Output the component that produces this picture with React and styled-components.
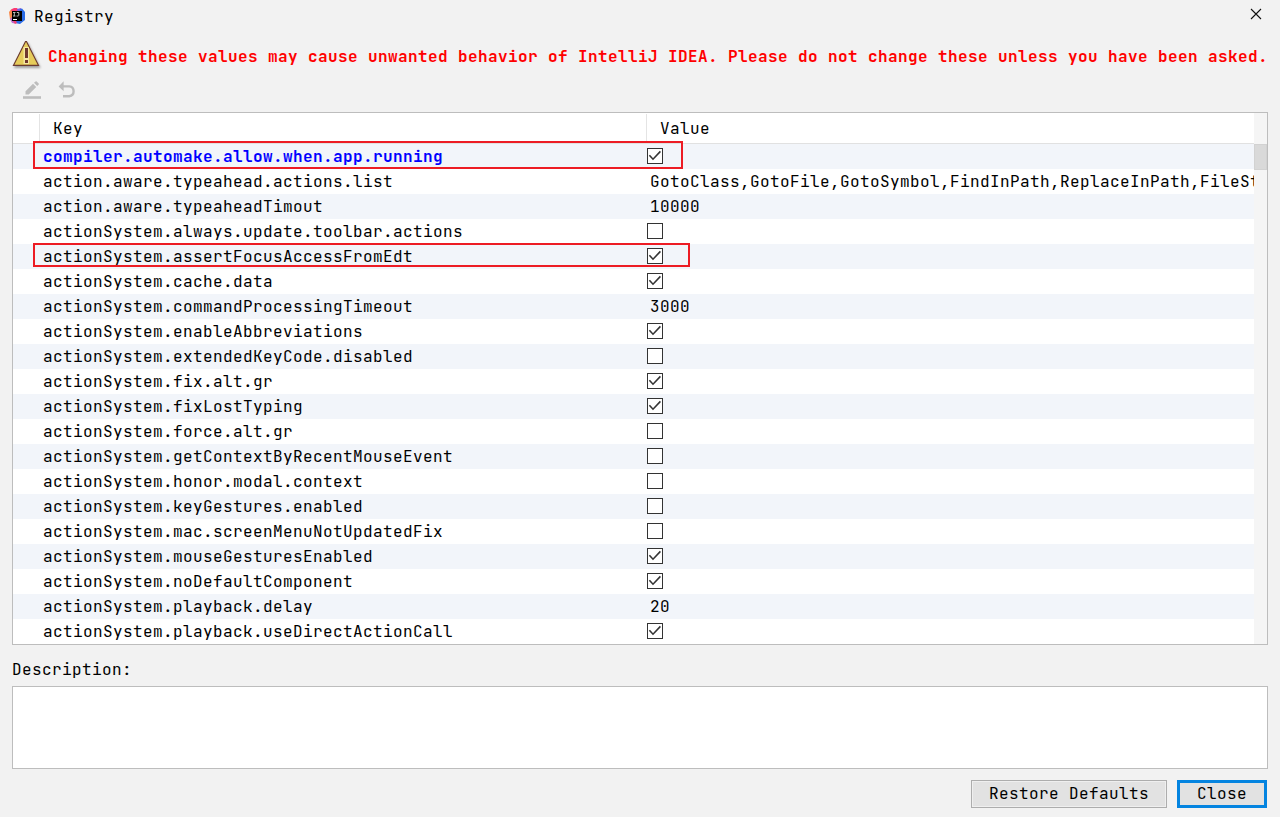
import React from "react";
import styled, { createGlobalStyle, css } from "styled-components";

const GlobalStyle = createGlobalStyle`
  * { box-sizing: border-box; }
  body {
    margin: 0;
    background: #f2f2f2;
    color: #000;
    font-family: "JetBrains Mono", "DejaVu Sans Mono", monospace;
    font-size: 16px;
    line-height: 24px;
    letter-spacing: 0.4px;
    overflow: hidden;
  }
`;

const Dialog = styled.div`
  width: 1280px;
  height: 817px;
  display: flex;
  flex-direction: column;
  background: #f2f2f2;
`;

const TitleBar = styled.header`
  height: 32px;
  flex: none;
  display: flex;
  align-items: center;
  padding: 0 18px 0 9px;
`;

const Title = styled.h1`
  margin: 2px auto 0 8px;
  font: inherit;
`;

const CloseIcon = styled.svg`
  display: block;
  margin-top: -4px;
`;

const Warning = styled.div`
  height: 40px;
  flex: none;
  display: flex;
  align-items: flex-start;
  padding: 8px 0 0 11px;
  color: #ff0000;
  font-weight: bold;
  white-space: nowrap;
`;

const WarningText = styled.span`
  margin: 5px 0 0 5px;
`;

const Toolbar = styled.div`
  height: 40px;
  flex: none;
  display: flex;
  gap: 16px;
  padding: 8px 0 0 22px;
`;

const Table = styled.section`
  height: 533px;
  flex: none;
  margin: 0 12px;
  display: flex;
  border: 1px solid #bdbdbd;
  background: #fff;
`;

const Grid = styled.div`
  flex: 1;
  min-width: 0;
  position: relative;
`;

const columns = css`
  display: grid;
  grid-template-columns: 26px 607px minmax(0, 1fr);
`;

const HeaderRow = styled.div`
  ${columns}
  height: 31px;
  padding-top: 1px;
  border-bottom: 1px solid #e1e1e1;
`;

const HeaderCell = styled.div`
  padding: 3px 0 0 13px;
  border-left: ${(p) => (p.$first ? "none" : "1px solid #e4e4e4")};
`;

const Row = styled.div`
  ${columns}
  height: 25px;
  background: ${(p) => (p.$striped ? "#f2f5fa" : "#fff")};
`;

const KeyCell = styled.div`
  grid-column: 2;
  padding: 1px 0 0 4px;
  color: ${(p) => (p.$changed ? "#0000ff" : "#000")};
  font-weight: ${(p) => (p.$changed ? "bold" : "normal")};
`;

const ValueCell = styled.div`
  padding-left: ${(p) => (p.$check ? "1px" : "4px")};
  padding-top: ${(p) => (p.$check ? "4px" : "1px")};
  overflow: hidden;
  white-space: nowrap;
`;

const Box = styled.span`
  display: block;
  width: 16px;
  height: 16px;
  border: 1px solid #333;
  background: #fff;

  svg { display: block; }
`;

const Scrollbar = styled.div`
  width: 13px;
  flex: none;
  padding-top: 31px;
  background: #f5f5f5;
`;

const Thumb = styled.div`
  height: 26px;
  background: #d9d9d9;
  border: 1px solid #d2d2d2;
`;

/* Annotation frames that lie over the rows they point out. */
const Highlight = styled.div`
  position: absolute;
  left: 20px;
  top: ${(p) => p.$top}px;
  width: ${(p) => p.$width}px;
  height: ${(p) => p.$height}px;
  border: 2px solid #ed1c24;
`;

const Label = styled.label`
  height: 41px;
  flex: none;
  padding: 13px 12px 0;
`;

const Description = styled.div`
  height: 83px;
  flex: none;
  margin: 0 12px;
  border: 1px solid #bdbdbd;
  background: #fff;
`;

const Footer = styled.footer`
  display: flex;
  justify-content: flex-end;
  gap: 10px;
  padding: 11px 13px 0;
`;

const Button = styled.button`
  width: ${(p) => p.$width}px;
  height: 28px;
  padding: 0 0 1px;
  display: flex;
  align-items: center;
  justify-content: center;
  border: ${(p) => (p.$primary ? "3px solid #0484e0" : "1px solid #adadad")};
  box-shadow: ${(p) => (p.$primary ? "none" : "inset 0 0 0 1px #efefef")};
  background: #e2e2e2;
  color: #000;
  font: inherit;
  letter-spacing: inherit;
`;

const rows = [
  ["compiler.automake.allow.when.app.running", true],
  ["action.aware.typeahead.actions.list", "GotoClass,GotoFile,GotoSymbol,FindInPath,ReplaceInPath,FileSt"],
  ["action.aware.typeaheadTimout", "10000"],
  ["actionSystem.always.update.toolbar.actions", false],
  ["actionSystem.assertFocusAccessFromEdt", true],
  ["actionSystem.cache.data", true],
  ["actionSystem.commandProcessingTimeout", "3000"],
  ["actionSystem.enableAbbreviations", true],
  ["actionSystem.extendedKeyCode.disabled", false],
  ["actionSystem.fix.alt.gr", true],
  ["actionSystem.fixLostTyping", true],
  ["actionSystem.force.alt.gr", false],
  ["actionSystem.getContextByRecentMouseEvent", false],
  ["actionSystem.honor.modal.context", false],
  ["actionSystem.keyGestures.enabled", false],
  ["actionSystem.mac.screenMenuNotUpdatedFix", false],
  ["actionSystem.mouseGesturesEnabled", true],
  ["actionSystem.noDefaultComponent", true],
  ["actionSystem.playback.delay", "20"],
  ["actionSystem.playback.useDirectActionCall", true],
];

function Logo() {
  return (
    <svg width="17" height="16" viewBox="0 0 17 16">
      <path d="M0 4 2 1.5 5 4 4 12 1 11.5z" fill="#f98a4b" />
      <path d="M1 11 4 8 9 13 6 15.5 3 15z" fill="#b86fd0" />
      <path d="M2 1.5 5 0 8 0 11 4 4 7z" fill="#fb3a72" />
      <path d="M8 1 12 0 14 4 9 6z" fill="#7c5be0" />
      <path d="M11 1.5 13 .5 16 4 16 12 11 16 6 15 9 8z" fill="#2a6be6" />
      <path d="M4 13h3l1 2-2 1z" fill="#ef3f78" />
      <rect x="3" y="3" width="10" height="10" fill="#000" />
      <path d="M4 4.5h2.5M5.3 4.5v3.5M4 8h2.5M7.8 4.5h2v2.8q0 .7-.8.7H7.5" stroke="#bbb" strokeWidth="1" fill="none" />
      <path d="M4 11.5h4" stroke="#fff" strokeWidth="1" />
    </svg>
  );
}

function WarningIcon() {
  return (
    <svg width="32" height="32" viewBox="0 0 32 32">
      <defs>
        <filter id="shade" x="-20%" y="-20%" width="150%" height="150%">
          <feDropShadow dx="1.2" dy="2" stdDeviation="1.2" floodColor="#000" floodOpacity="0.35" />
        </filter>
      </defs>
      <path d="M14.5 1.5h1L27.5 25.3H2.5z" fill="#e6cc5a" stroke="#6b3a30" strokeWidth="1.2" filter="url(#shade)" />
      <path d="M12.5 7h5.5v17h-5.5z" fill="#f5e7a0" />
      <path d="M14 8h3v10h-3zM14 20h3v3h-3z" fill="#70382e" />
    </svg>
  );
}

function EditIcon() {
  return (
    <svg width="20" height="20" viewBox="0 0 20 20" fill="#bdbdbd">
      <path d="M1 16.2h18v2.6H1z" />
      <path d="M3.5 11.3 11 3.8l3.2 3.2-7.5 7.5H3.5zM12 2.8 13.5 1.4q.6-.5 1.2 0l2 2q.5.6 0 1.2L15.2 6z" />
    </svg>
  );
}

function UndoIcon() {
  return (
    <svg width="20" height="20" viewBox="0 0 20 20">
      <path d="M5 6.4h6.3q4.3.5 4.3 4.9t-4.3 4.9H5" fill="none" stroke="#bdbdbd" strokeWidth="2.4" />
      <path d="M.6 6.4 5.6 1.3v10z" fill="#bdbdbd" />
    </svg>
  );
}

function Checkbox({ checked }) {
  return (
    <Box>
      {checked && (
        <svg width="14" height="14" viewBox="0 0 14 14">
          <path d="M1.4 6.3 5 10.2 12.4 2.4" fill="none" stroke="#333" strokeWidth="1.6" />
        </svg>
      )}
    </Box>
  );
}

export default function App() {
  return (
    <>
      <GlobalStyle />
      <Dialog>
        <TitleBar>
          <Logo />
          <Title>Registry</Title>
          <CloseIcon width="12" height="12" viewBox="0 0 12 12">
            <path d="M1 1l10 10M11 1 1 11" stroke="#111" strokeWidth="1.1" />
          </CloseIcon>
        </TitleBar>
        <Warning>
          <WarningIcon />
          <WarningText>
            Changing these values may cause unwanted behavior of IntelliJ IDEA. Please do not change these unless you have been asked.
          </WarningText>
        </Warning>
        <Toolbar>
          <EditIcon />
          <UndoIcon />
        </Toolbar>
        <Table>
          <Grid>
            <HeaderRow>
              <HeaderCell $first />
              <HeaderCell>Key</HeaderCell>
              <HeaderCell>Value</HeaderCell>
            </HeaderRow>
            {rows.map(([name, value], i) => (
              <Row key={name} $striped={i % 2 === 0}>
                <KeyCell $changed={i === 0}>{name}</KeyCell>
                <ValueCell $check={typeof value === "boolean"}>
                  {typeof value === "boolean" ? <Checkbox checked={value} /> : value}
                </ValueCell>
              </Row>
            ))}
            <Highlight $top={28} $width={650} $height={28} />
            <Highlight $top={130} $width={657} $height={24} />
          </Grid>
          <Scrollbar>
            <Thumb />
          </Scrollbar>
        </Table>
        <Label>Description:</Label>
        <Description />
        <Footer>
          <Button $width={196}>Restore Defaults</Button>
          <Button $width={90} $primary>Close</Button>
        </Footer>
      </Dialog>
    </>
  );
}
